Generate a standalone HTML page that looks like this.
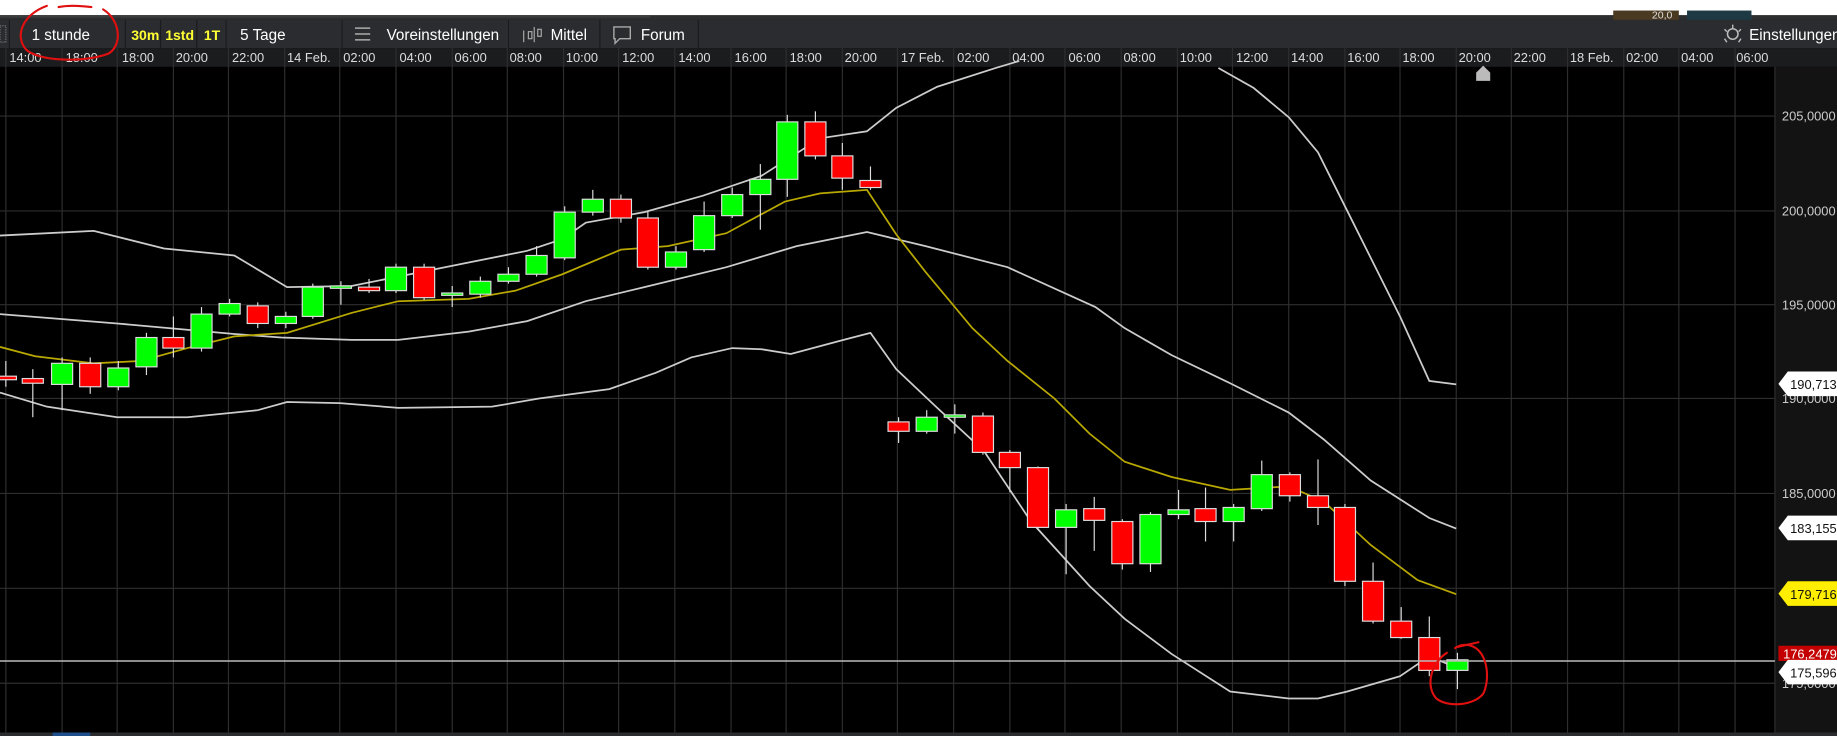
<!DOCTYPE html>
<html><head><meta charset="utf-8"><style>
html,body{margin:0;padding:0;background:#000;overflow:hidden}
svg{display:block}
text{font-family:"Liberation Sans",sans-serif}
</style></head><body>
<svg width="1837" height="736" viewBox="0 0 1568 628" preserveAspectRatio="none" xmlns="http://www.w3.org/2000/svg">
<rect x="0" y="0" width="1568" height="628" fill="#000"/>
<!-- top white strip -->
<rect x="0" y="0" width="1568" height="13" fill="#fff"/>
<rect x="0" y="13" width="1568" height="4" fill="#2c2e30"/>
<rect x="0" y="13" width="555" height="2" fill="#3a3c3e"/>
<rect x="1377" y="9" width="56" height="8" fill="#4a3a22"/>
<text x="1410" y="16" font-size="9" fill="#ddd">20,0</text>
<rect x="1440" y="9" width="55" height="8" fill="#1d3a44"/>
<!-- toolbar -->
<rect x="0" y="17" width="1568" height="24" fill="#2a2c2f"/>
<g stroke="#1a1b1d" stroke-width="1">
<line x1="8" y1="17" x2="8" y2="41"/><line x1="107" y1="17" x2="107" y2="41"/>
<line x1="137" y1="17" x2="137" y2="41"/><line x1="168" y1="17" x2="168" y2="41"/>
<line x1="193" y1="17" x2="193" y2="41"/><line x1="292" y1="17" x2="292" y2="41"/>
<line x1="434" y1="17" x2="434" y2="41"/><line x1="512" y1="17" x2="512" y2="41"/>
<line x1="596" y1="17" x2="596" y2="41"/>
</g>
<rect x="0" y="22" width="5" height="14" fill="none" stroke="#777" stroke-dasharray="1,1"/>
<text x="27" y="34" font-size="13" fill="#fff">1 stunde</text>
<text x="112" y="34" font-size="12" font-weight="bold" fill="#ffff33">30m</text>
<text x="141" y="34" font-size="12" font-weight="bold" fill="#ffff33">1std</text>
<text x="174" y="34" font-size="12" font-weight="bold" fill="#ffff33">1T</text>
<text x="205" y="34" font-size="13" fill="#fff">5 Tage</text>
<g stroke="#aaa" stroke-width="1.3" fill="none">
<line x1="303" y1="24" x2="316" y2="24"/><line x1="303" y1="29" x2="316" y2="29"/><line x1="303" y1="34" x2="316" y2="34"/>
</g>
<text x="330" y="34" font-size="13" fill="#fff">Voreinstellungen</text>
<g stroke="#aaa" stroke-width="1" fill="none">
<line x1="447" y1="26" x2="447" y2="36"/><rect x="451" y="27" width="3" height="6"/><line x1="456" y1="23" x2="456" y2="36"/><rect x="459" y="25" width="3" height="6"/>
</g>
<text x="470" y="34" font-size="13" fill="#fff">Mittel</text>
<path d="M524 23h14v10h-9l-4 4v-4h-1z" fill="none" stroke="#aaa" stroke-width="1.2"/>
<text x="547" y="34" font-size="13" fill="#fff">Forum</text>
<circle cx="1479" cy="29" r="4.5" fill="none" stroke="#bbb" stroke-width="1.3"/>
<g stroke="#bbb" stroke-width="1.2"><line x1="1479" y1="21" x2="1479" y2="24"/><line x1="1472" y1="33" x2="1474" y2="36"/><line x1="1486" y1="33" x2="1484" y2="36"/><line x1="1472" y1="25" x2="1474" y2="27"/><line x1="1486" y1="25" x2="1484" y2="27"/></g>
<text x="1493" y="34" font-size="13" fill="#fff">Einstellungen</text>
<!-- time axis -->
<rect x="0" y="41" width="1568" height="16" fill="#1b1c1e"/>
<g font-size="11" fill="#ddd">
<text x="8" y="53">14:00</text><text x="56" y="53">18:00</text><text x="104" y="53">18:00</text>
<text x="150" y="53">20:00</text><text x="198" y="53">22:00</text><text x="245" y="53">14 Feb.</text>
<text x="293" y="53">02:00</text><text x="341" y="53">04:00</text><text x="388" y="53">06:00</text>
<text x="435" y="53">08:00</text><text x="483" y="53">10:00</text><text x="531" y="53">12:00</text>
<text x="579" y="53">14:00</text><text x="627" y="53">16:00</text><text x="674" y="53">18:00</text>
<text x="721" y="53">20:00</text><text x="769" y="53">17 Feb.</text><text x="817" y="53">02:00</text>
<text x="864" y="53">04:00</text><text x="912" y="53">06:00</text><text x="959" y="53">08:00</text>
<text x="1007" y="53">10:00</text><text x="1055" y="53">12:00</text><text x="1102" y="53">14:00</text>
<text x="1150" y="53">16:00</text><text x="1197" y="53">18:00</text><text x="1245" y="53">20:00</text>
<text x="1292" y="53">22:00</text><text x="1340" y="53">18 Feb.</text><text x="1388" y="53">02:00</text>
<text x="1435" y="53">04:00</text><text x="1482" y="53">06:00</text>
</g>
<!-- right axis panel -->
<rect x="1515" y="57" width="53" height="569" fill="#131313"/>
<!-- grid -->
<g stroke="#2e2e2e" stroke-width="1">
<line x1="5" y1="41" x2="5" y2="626"/><line x1="53" y1="41" x2="53" y2="626"/><line x1="100" y1="41" x2="100" y2="626"/>
<line x1="148" y1="41" x2="148" y2="626"/><line x1="195" y1="41" x2="195" y2="626"/><line x1="243" y1="41" x2="243" y2="626"/>
<line x1="290" y1="41" x2="290" y2="626"/><line x1="338" y1="41" x2="338" y2="626"/><line x1="386" y1="41" x2="386" y2="626"/>
<line x1="433" y1="41" x2="433" y2="626"/><line x1="481" y1="41" x2="481" y2="626"/><line x1="528" y1="41" x2="528" y2="626"/>
<line x1="576" y1="41" x2="576" y2="626"/><line x1="624" y1="41" x2="624" y2="626"/><line x1="671" y1="41" x2="671" y2="626"/>
<line x1="719" y1="41" x2="719" y2="626"/><line x1="766" y1="41" x2="766" y2="626"/><line x1="814" y1="41" x2="814" y2="626"/>
<line x1="862" y1="41" x2="862" y2="626"/><line x1="909" y1="41" x2="909" y2="626"/><line x1="957" y1="41" x2="957" y2="626"/>
<line x1="1005" y1="41" x2="1005" y2="626"/><line x1="1052" y1="41" x2="1052" y2="626"/><line x1="1100" y1="41" x2="1100" y2="626"/>
<line x1="1148" y1="41" x2="1148" y2="626"/><line x1="1195" y1="41" x2="1195" y2="626"/><line x1="1243" y1="41" x2="1243" y2="626"/>
<line x1="1290" y1="41" x2="1290" y2="626"/><line x1="1338" y1="41" x2="1338" y2="626"/><line x1="1386" y1="41" x2="1386" y2="626"/>
<line x1="1433" y1="41" x2="1433" y2="626"/><line x1="1481" y1="41" x2="1481" y2="626"/><line x1="1515" y1="57" x2="1515" y2="626"/>
<line x1="0" y1="99" x2="1515" y2="99"/><line x1="0" y1="180" x2="1515" y2="180"/><line x1="0" y1="260" x2="1515" y2="260"/>
<line x1="0" y1="340" x2="1515" y2="340"/><line x1="0" y1="421" x2="1515" y2="421"/><line x1="0" y1="502" x2="1515" y2="502"/>
<line x1="0" y1="583" x2="1515" y2="583"/>
</g>
<!-- bollinger & sma -->
<g fill="none" stroke-width="1.5">
<polyline stroke="#ccc" points="0,201 80,197 140,212 200,218 245,245 300,244 340,236 400,224 450,214 480,204 500,190 550,181 600,167 650,150 700,118 740,112 765,92 800,74 850,58 870,52"/>
<polyline stroke="#ccc" points="1040,58 1070,75 1100,100 1125,130 1150,180 1195,270 1220,325 1243,328"/>
<polyline stroke="#ccc" points="0,268 100,276 200,285 240,288 300,290 340,290 400,283 450,274 500,257 550,245 620,228 680,210 740,198 790,210 860,228 935,262 960,280 1000,303 1050,327 1100,352 1130,375 1170,410 1220,442 1243,451"/>
<polyline stroke="#ccc" points="0,335 40,347 100,356 160,356 220,350 245,343 290,344 340,348 420,347 460,340 520,332 560,318 590,305 625,297 650,298 675,302 720,290 743,284 765,315 800,348 840,385 880,445 930,500 960,528 1000,558 1050,590 1100,596 1125,596 1150,590 1195,577 1220,560 1244,570"/>
<polyline stroke="#b8a800" points="0,296 30,304 80,310 120,308 160,297 200,287 245,284 300,267 340,257 400,255 440,248 480,234 530,213 570,210 620,199 670,172 700,165 740,162 765,200 790,232 830,280 860,308 900,340 930,370 960,394 1000,407 1050,418 1100,415 1130,428 1170,465 1210,495 1243,507"/>
</g>
<!-- candles -->
<g stroke="#ddd" stroke-width="1">
<line x1="5" y1="308" x2="5" y2="330"/><line x1="28" y1="315" x2="28" y2="356"/><line x1="53" y1="305" x2="53" y2="350"/>
<line x1="77" y1="305" x2="77" y2="336"/><line x1="101" y1="308" x2="101" y2="333"/><line x1="125" y1="284" x2="125" y2="320"/>
<line x1="148" y1="270" x2="148" y2="305"/><line x1="172" y1="262" x2="172" y2="300"/><line x1="196" y1="255" x2="196" y2="270"/>
<line x1="220" y1="258" x2="220" y2="280"/><line x1="244" y1="266" x2="244" y2="280"/><line x1="267" y1="242" x2="267" y2="272"/>
<line x1="291" y1="240" x2="291" y2="260"/><line x1="315" y1="238" x2="315" y2="250"/><line x1="338" y1="225" x2="338" y2="250"/>
<line x1="362" y1="225" x2="362" y2="256"/><line x1="386" y1="244" x2="386" y2="262"/><line x1="410" y1="236" x2="410" y2="254"/>
<line x1="434" y1="228" x2="434" y2="242"/><line x1="458" y1="210" x2="458" y2="236"/><line x1="482" y1="176" x2="482" y2="222"/>
<line x1="506" y1="162" x2="506" y2="184"/><line x1="530" y1="166" x2="530" y2="190"/><line x1="553" y1="180" x2="553" y2="230"/>
<line x1="577" y1="210" x2="577" y2="230"/><line x1="601" y1="172" x2="601" y2="215"/><line x1="625" y1="160" x2="625" y2="186"/>
<line x1="649" y1="140" x2="649" y2="196"/><line x1="672" y1="98" x2="672" y2="168"/><line x1="696" y1="95" x2="696" y2="136"/>
<line x1="719" y1="122" x2="719" y2="162"/><line x1="743" y1="142" x2="743" y2="162"/>
<line x1="767" y1="356" x2="767" y2="378"/><line x1="791" y1="350" x2="791" y2="370"/><line x1="815" y1="345" x2="815" y2="370"/>
<line x1="839" y1="352" x2="839" y2="388"/><line x1="862" y1="384" x2="862" y2="420"/><line x1="886" y1="398" x2="886" y2="452"/>
<line x1="910" y1="430" x2="910" y2="490"/><line x1="934" y1="424" x2="934" y2="470"/><line x1="958" y1="443" x2="958" y2="486"/>
<line x1="982" y1="437" x2="982" y2="488"/><line x1="1006" y1="418" x2="1006" y2="443"/><line x1="1029" y1="416" x2="1029" y2="462"/>
<line x1="1053" y1="430" x2="1053" y2="462"/><line x1="1077" y1="393" x2="1077" y2="436"/><line x1="1101" y1="403" x2="1101" y2="428"/>
<line x1="1125" y1="392" x2="1125" y2="448"/><line x1="1148" y1="430" x2="1148" y2="500"/><line x1="1172" y1="480" x2="1172" y2="532"/>
<line x1="1196" y1="518" x2="1196" y2="545"/><line x1="1220" y1="526" x2="1220" y2="577"/><line x1="1244" y1="557" x2="1244" y2="588"/>
</g>
<g stroke="#ddd" stroke-width="1">
<rect x="-4" y="321" width="18" height="3" fill="#f00"/>
<rect x="19" y="323" width="18" height="4" fill="#f00"/>
<rect x="44" y="310" width="18" height="18" fill="#0f0"/>
<rect x="68" y="310" width="18" height="20" fill="#f00"/>
<rect x="92" y="314" width="18" height="16" fill="#0f0"/>
<rect x="116" y="288" width="18" height="25" fill="#0f0"/>
<rect x="139" y="288" width="18" height="9" fill="#f00"/>
<rect x="163" y="268" width="18" height="29" fill="#0f0"/>
<rect x="187" y="259" width="18" height="9" fill="#0f0"/>
<rect x="211" y="261" width="18" height="15" fill="#f00"/>
<rect x="235" y="270" width="18" height="6" fill="#0f0"/>
<rect x="258" y="245" width="18" height="25" fill="#0f0"/>
<rect x="282" y="244" width="18" height="2" fill="#0f0"/>
<rect x="306" y="245" width="18" height="3" fill="#f00"/>
<rect x="329" y="228" width="18" height="20" fill="#0f0"/>
<rect x="353" y="228" width="18" height="26" fill="#f00"/>
<rect x="377" y="250" width="18" height="2" fill="#0f0"/>
<rect x="401" y="240" width="18" height="11" fill="#0f0"/>
<rect x="425" y="234" width="18" height="6" fill="#0f0"/>
<rect x="449" y="218" width="18" height="16" fill="#0f0"/>
<rect x="473" y="181" width="18" height="39" fill="#0f0"/>
<rect x="497" y="170" width="18" height="11" fill="#0f0"/>
<rect x="521" y="170" width="18" height="16" fill="#f00"/>
<rect x="544" y="186" width="18" height="42" fill="#f00"/>
<rect x="568" y="215" width="18" height="13" fill="#0f0"/>
<rect x="592" y="184" width="18" height="29" fill="#0f0"/>
<rect x="616" y="166" width="18" height="18" fill="#0f0"/>
<rect x="640" y="153" width="18" height="13" fill="#0f0"/>
<rect x="663" y="104" width="18" height="49" fill="#0f0"/>
<rect x="687" y="104" width="18" height="29" fill="#f00"/>
<rect x="710" y="133" width="18" height="19" fill="#f00"/>
<rect x="734" y="154" width="18" height="6" fill="#f00"/>
<rect x="758" y="360" width="18" height="8" fill="#f00"/>
<rect x="782" y="356" width="18" height="12" fill="#0f0"/>
<rect x="806" y="354" width="18" height="2" fill="#0f0"/>
<rect x="830" y="355" width="18" height="31" fill="#f00"/>
<rect x="853" y="386" width="18" height="13" fill="#f00"/>
<rect x="877" y="399" width="18" height="51" fill="#f00"/>
<rect x="901" y="435" width="18" height="15" fill="#0f0"/>
<rect x="925" y="434" width="18" height="10" fill="#f00"/>
<rect x="949" y="445" width="18" height="36" fill="#f00"/>
<rect x="973" y="439" width="18" height="42" fill="#0f0"/>
<rect x="997" y="435" width="18" height="4" fill="#0f0"/>
<rect x="1020" y="434" width="18" height="11" fill="#f00"/>
<rect x="1044" y="433" width="18" height="12" fill="#0f0"/>
<rect x="1068" y="405" width="18" height="29" fill="#0f0"/>
<rect x="1092" y="405" width="18" height="18" fill="#f00"/>
<rect x="1116" y="423" width="18" height="10" fill="#f00"/>
<rect x="1139" y="433" width="18" height="63" fill="#f00"/>
<rect x="1163" y="496" width="18" height="34" fill="#f00"/>
<rect x="1187" y="530" width="18" height="14" fill="#f00"/>
<rect x="1211" y="544" width="18" height="28" fill="#f00"/>
<rect x="1235" y="563" width="18" height="9" fill="#0f0"/>
</g>
<!-- current price line -->
<line x1="0" y1="564" x2="1515" y2="564" stroke="#bbb" stroke-width="1.2"/>
<path d="M1260 62 l6 -6 l6 6 v7 h-12z" fill="#bbb"/>
<!-- axis labels -->
<g font-size="11" fill="#ccc">
<text x="1521" y="103">205,0000</text><text x="1521" y="184">200,0000</text>
<text x="1521" y="264">195,0000</text><text x="1521" y="344">190,0000</text>
<text x="1521" y="425">185,0000</text><text x="1521" y="587">175,0000</text>
</g>
<path d="M1526 317 h42 v21 h-42 l-8 -10.5z" fill="#fff"/>
<text x="1528" y="332" font-size="11" fill="#111">190,7138</text>
<path d="M1526 440 h42 v21 h-42 l-8 -10.5z" fill="#fff"/>
<text x="1528" y="455" font-size="11" fill="#111">183,1553</text>
<path d="M1526 496 h42 v21 h-42 l-8 -10.5z" fill="#ffee00"/>
<text x="1528" y="511" font-size="11" fill="#111">179,7162</text>
<rect x="1518" y="551" width="50" height="13" fill="#c40000"/>
<text x="1522" y="562" font-size="11" fill="#fff">176,2479</text>
<path d="M1526 563 h42 v21 h-42 l-8 -10.5z" fill="#fff"/>
<text x="1528" y="578" font-size="11" fill="#111">175,5968</text>
<!-- bottom strip -->
<rect x="0" y="625" width="1568" height="3" fill="#2a2c2f"/>
<rect x="45" y="625" width="32" height="3" fill="#1f4f8a"/>
<!-- red annotations -->
<g fill="none" stroke="#e01010" stroke-width="1.8" stroke-linecap="round">
<path d="M40 5 C20 12 12 30 22 42 C32 52 70 54 92 46 C104 40 104 18 88 8 M50 6 C60 4 70 5 78 6"/>
<path d="M1235 557 C1222 565 1216 585 1226 596 C1236 604 1258 602 1266 592 C1272 580 1270 558 1258 552 C1252 549 1246 550 1242 553 M1244 552 L1262 548"/>
</g>
</svg>
</body></html>
